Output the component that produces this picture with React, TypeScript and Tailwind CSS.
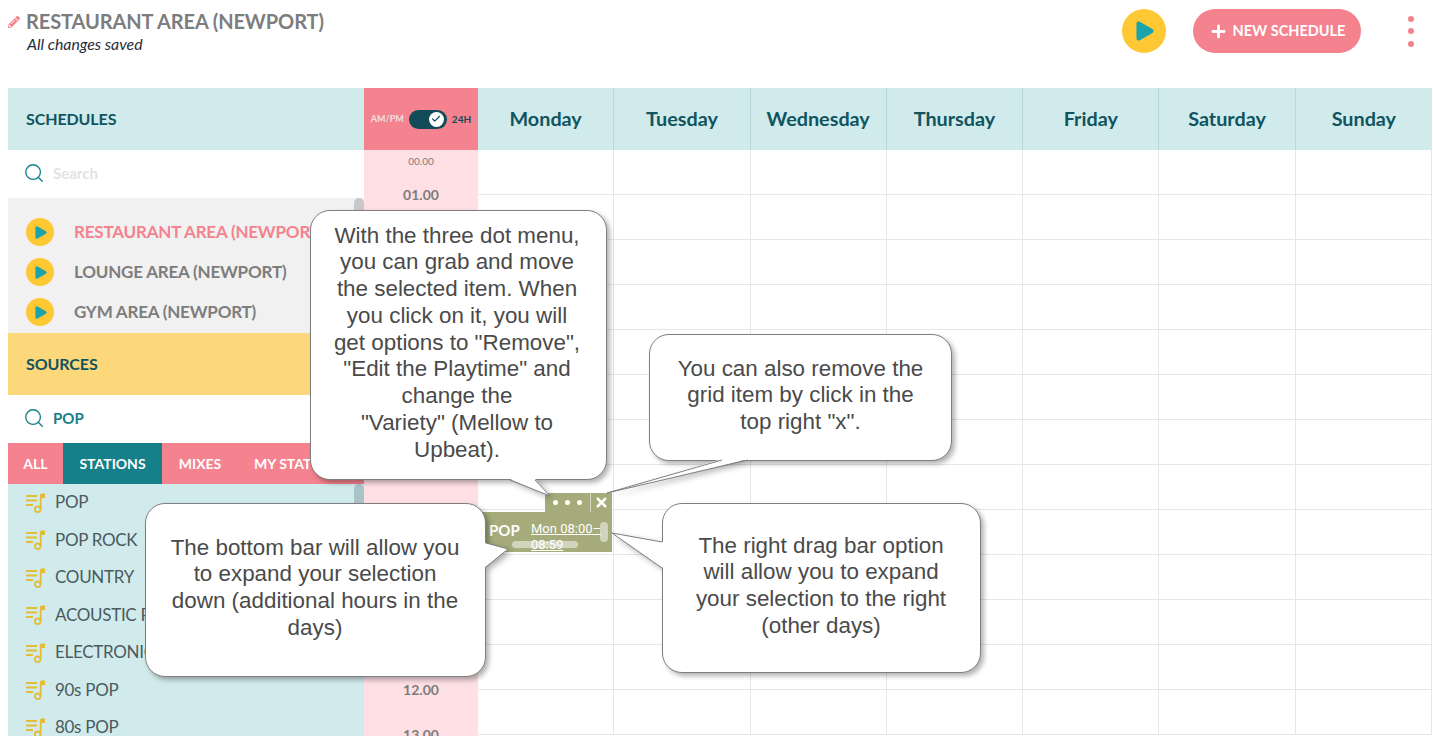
import { Check, Plus, Search, X } from 'lucide-react'
import { FaPencilAlt } from 'react-icons/fa'

const days = ['Monday', 'Tuesday', 'Wednesday', 'Thursday', 'Friday', 'Saturday', 'Sunday']
const hours = ['01.00', '02.00', '03.00', '04.00', '05.00', '06.00', '07.00', '08.00', '09.00', '10.00', '11.00', '12.00', '13.00']
const schedules = ['RESTAURANT AREA (NEWPORT)', 'LOUNGE AREA (NEWPORT)', 'GYM AREA (NEWPORT)']
const stations = ['POP', 'POP ROCK', 'COUNTRY', 'ACOUSTIC POP', 'ELECTRONIC POP', '90s POP', '80s POP']

const tails = [
  { fill: '510,479 535,479 550,496', line: '510,480 550,496 535,480' },
  { fill: '722,459 748,459 607,493', line: '722,460 607,493 748,460' },
  { fill: '663,542 663,568 612,533', line: '662,542 612,533 662,568' },
  { fill: '485,543 485,567 508,549', line: '486,543 508,549 486,567' },
]

function PlayButton({ size }: { size: 'lg' | 'sm' }) {
  return (
    <div className={`rounded-full bg-[#fec835] flex items-center justify-center shrink-0 ${size === 'lg' ? 'w-11 h-11' : 'w-7 h-7'}`}>
      <svg viewBox="0 0 20 22" className={size === 'lg' ? 'w-[18px] h-5 ml-0.5' : 'w-3 h-[13px] ml-px'}>
        <path d="M3 3 L17 11 L3 19 Z" fill="#1ba3ac" stroke="#1ba3ac" strokeWidth="5" strokeLinejoin="round" />
      </svg>
    </div>
  )
}

function MusicIcon() {
  return (
    <svg viewBox="0 0 20 20" className="w-5 h-5 shrink-0" fill="none" stroke="#e3bd38" strokeWidth="1.8">
      <path d="M0 3H11M0 7.5H11M0 12H7" />
      <path d="M14.7 1V16" />
      <circle cx="11.7" cy="16.3" r="2.8" />
      <path d="M15 0.5H19V5H15Z" fill="#e3bd38" stroke="none" />
    </svg>
  )
}

function Callout({ className, lines }: { className: string; lines: string[] }) {
  return (
    <div className={`absolute z-20 bg-white border border-[#7f7f7f] rounded-[20px] shadow-[3px_3px_5px_rgba(0,0,0,0.3)] text-center text-[#4a4a4a] text-[22.4px] leading-[26.8px] font-['Liberation_Sans',sans-serif] ${className}`}>
      {lines.map((l) => (
        <div key={l} className="whitespace-nowrap">{l}</div>
      ))}
    </div>
  )
}

export default function App() {
  return (
    <div className="relative h-screen overflow-hidden bg-white pl-2 pr-px font-['Lato',sans-serif]">
      {/* Top bar */}
      <div className="h-[88px] flex items-start">
        <div className="flex-1 pt-2">
          <div className="flex items-center gap-[6px]">
            <FaPencilAlt size={12} className="text-[#f4828f] mt-0.5" />
            <span className="text-[20px] leading-[26px] font-bold text-[#7d7d7d] tracking-[-0.1px]">RESTAURANT AREA (NEWPORT)</span>
          </div>
          <div className="pl-[19px] mt-px text-[15.8px] leading-[18px] italic text-[#1f2d3d]">All changes saved</div>
        </div>
        <div className="pt-[9px] flex items-center">
          <PlayButton size="lg" />
          <button className="ml-[27px] w-[168px] h-11 rounded-full bg-[#f4828f] text-white font-bold text-[14.5px] flex items-center justify-center gap-[5px]">
            <Plus size={19} strokeWidth={3.5} />
            NEW SCHEDULE
          </button>
          <div className="w-[71px] pl-[47px] flex flex-col items-start gap-[6.5px]">
            <span className="w-1.5 h-1.5 rounded-full bg-[#f4828f]" />
            <span className="w-1.5 h-1.5 rounded-full bg-[#f4828f]" />
            <span className="w-1.5 h-1.5 rounded-full bg-[#f4828f]" />
          </div>
        </div>
      </div>

      <div className="flex">
        {/* Left panel */}
        <div className="w-[356px] shrink-0">
          <div className="h-[62px] bg-[#d1ebec] flex items-center pl-[18px] text-base font-bold text-[#10545f] tracking-[-0.1px]">SCHEDULES</div>
          <div className="h-12 flex items-center pl-[15px] gap-2 pb-0.5">
            <Search size={22} strokeWidth={1.5} className="text-[#16808a]" />
            <span className="text-[15px] font-bold text-[#e3e3e3]">Search</span>
          </div>
          <div className="relative h-[135px] bg-[#f1f1f1] pt-[14px] pl-[18px] pr-[10px] overflow-hidden">
            <div className="absolute right-0 top-0 w-2.5 h-24 rounded-full bg-[#c8c8c8]" />
            {schedules.map((s, i) => (
              <div key={s} className="h-10 flex items-center gap-[20px]">
                <PlayButton size="sm" />
                <span className={`text-[17px] font-bold whitespace-nowrap tracking-[-0.2px] ${i === 0 ? 'text-[#f4828f]' : 'text-[#7d7d7d]'}`}>{s}</span>
              </div>
            ))}
          </div>
          <div className="h-[62px] bg-[#fdd87a] flex items-center pl-[18px] text-base font-bold text-[#10545f] tracking-[-0.1px]">SOURCES</div>
          <div className="h-12 flex items-center pl-[15px] gap-2 pb-0.5">
            <Search size={22} strokeWidth={1.5} className="text-[#16808a]" />
            <span className="text-[15px] font-bold text-[#16808a]">POP</span>
          </div>
          <div className="h-[41px] bg-[#f4828f] flex items-center text-white font-bold text-sm whitespace-nowrap overflow-hidden">
            <div className="w-[55px] h-full flex items-center justify-center">ALL</div>
            <div className="w-[99px] h-full bg-[#16808a] flex items-center justify-center">STATIONS</div>
            <div className="w-[76px] h-full flex items-center justify-center">MIXES</div>
            <div className="pl-4">MY STATIONS</div>
          </div>
          <div className="relative bg-[#d1ebec] h-[252px] pl-[18px] overflow-hidden">
            <div className="absolute right-0 top-0 w-2.5 h-24 rounded-full bg-[#a9c4c9]" />
            {stations.map((s) => (
              <div key={s} className="h-[37.5px] flex items-center gap-[9px]">
                <MusicIcon />
                <span className="text-[17px] tracking-[-0.3px] text-[#4b5a5e] whitespace-nowrap pb-0.5">{s}</span>
              </div>
            ))}
          </div>
        </div>

        {/* Time column */}
        <div className="w-[114px] shrink-0">
          <div className="h-[62px] bg-[#f4828f] flex items-center justify-center gap-[5px] font-bold">
            <span className="text-[9px] text-[#f3dfe3]">AM/PM</span>
            <div className="w-[38px] h-[19px] rounded-full bg-[#114b58] flex items-center justify-end pr-[3px]">
              <div className="w-[15px] h-[15px] rounded-full bg-white flex items-center justify-center">
                <Check size={10} strokeWidth={3} className="text-[#114b58]" />
              </div>
            </div>
            <span className="text-[10px] text-[#114b58]">24H</span>
          </div>
          <div className="bg-[#fddfe4] h-[600px] text-center text-[#7d7d7d]">
            <div className="h-[22px] flex items-center justify-center text-[10px]">00.00</div>
            {hours.map((h) => (
              <div key={h} className="h-[45px] flex items-center justify-center text-sm font-bold">{h}</div>
            ))}
          </div>
        </div>

        {/* Week grid */}
        <div className="flex-1">
          <div className="grid grid-cols-7 h-[62px] bg-[#d1ebec]">
            {days.map((d) => (
              <div key={d} className="flex items-center justify-center border-r border-[#b9d8da] text-[19.8px] font-bold text-[#10545f] last:border-r-0">{d}</div>
            ))}
          </div>
          <div className="grid grid-cols-7">
            {Array.from({ length: 7 * 13 }).map((_, i) => (
              <div key={i} className="h-[45px] border-r border-b border-[#e6e6e6]" />
            ))}
          </div>
        </div>
      </div>

      {/* Selected grid item */}
      <div className="absolute z-10 left-[545px] top-[493px] w-[67px] h-[19px] bg-[#a5ab7a] flex items-center text-white">
        <div className="flex-1 flex items-center justify-center gap-[7px]">
          <span className="w-[5px] h-[5px] rounded-full bg-white" />
          <span className="w-[5px] h-[5px] rounded-full bg-white" />
          <span className="w-[5px] h-[5px] rounded-full bg-white" />
        </div>
        <div className="w-[22px] h-full border-l border-[#d5d8bd] flex items-center justify-center">
          <X size={15} strokeWidth={4} />
        </div>
      </div>
      <div className="absolute z-10 left-[478px] top-[512px] w-[134px] h-10 bg-[#a5ab7a] text-white">
        <span className="absolute left-[11px] top-[9px] text-[15px] leading-[18px] font-bold">POP</span>
        <span className="absolute left-[53px] top-[9px] w-[72px] text-[13px] leading-[16px] underline font-['Roboto',sans-serif]">Mon 08:00–08:59</span>
        <div className="absolute left-[34px] top-[29px] w-[66px] h-[7px] rounded-full bg-white/50" />
        <div className="absolute left-[122px] top-[10px] w-2 h-5 rounded-full bg-white/50" />
      </div>

      {/* Callouts */}
      <svg className="absolute z-10 left-0 top-0 w-[1433px] h-[736px] pointer-events-none drop-shadow-[3px_3px_3px_rgba(0,0,0,0.35)]">
        {tails.map((t) => (
          <polygon key={t.fill} points={t.fill} fill="#fff" />
        ))}
      </svg>
      <Callout
        className="left-[310px] top-[210px] w-[297px] h-[270px] pt-[11.5px] pr-[3px]"
        lines={['With the three dot menu,', 'you can grab and move', 'the selected item. When', 'you click on it, you will', 'get options to "Remove",', '"Edit the Playtime" and', 'change the', '"Variety" (Mellow to', 'Upbeat).']}
      />
      <Callout
        className="left-[649px] top-[334px] w-[303px] h-[127px] pt-[20.5px]"
        lines={['You can also remove the', 'grid item by click in the', 'top right "x".']}
      />
      <Callout
        className="left-[662px] top-[503px] w-[319px] h-[170px] pt-[28.5px] pr-px"
        lines={['The right drag bar option', 'will allow you to expand', 'your selection to the right', '(other days)']}
      />
      <Callout
        className="left-[145px] top-[503px] w-[341px] h-[174px] pt-[30.5px] pr-px"
        lines={['The bottom bar will allow you', 'to expand your selection', 'down (additional hours in the', 'days)']}
      />
      <svg className="absolute z-30 left-0 top-0 w-[1433px] h-[736px] pointer-events-none">
        {tails.map((t) => (
          <g key={t.line}>
            <polygon points={t.fill} fill="#fff" />
            <polyline points={t.line} fill="none" stroke="#7f7f7f" strokeWidth="1" />
          </g>
        ))}
      </svg>
    </div>
  )
}
